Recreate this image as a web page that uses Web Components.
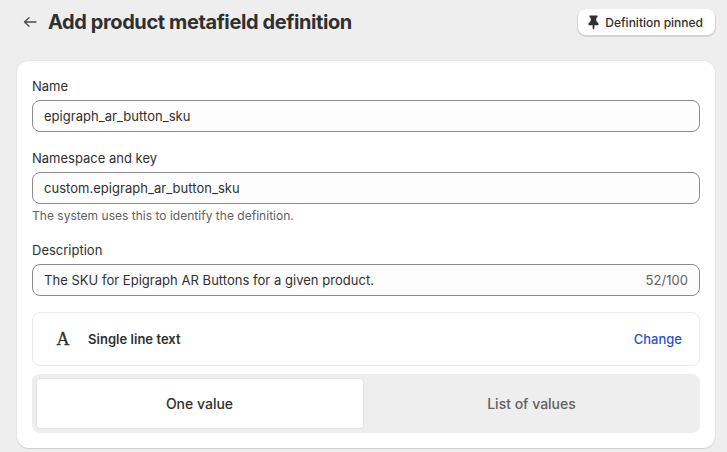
<!DOCTYPE html>
<html>
<head>
<meta charset="utf-8">
<style>
  html, body { margin: 0; height: 452px; overflow: hidden; }
  body { background: #eeeeee; font-family: Inter, "Liberation Sans", sans-serif; color: #303030; font-size: 13px; }
</style>
</head>
<body>
<page-header heading="Add product metafield definition"></page-header>
<form-card>
  <text-field label="Name" value="epigraph_ar_button_sku"></text-field>
  <text-field label="Namespace and key" value="custom.epigraph_ar_button_sku" help="The system uses this to identify the definition."></text-field>
  <text-field label="Description" value="The SKU for Epigraph AR Buttons for a given product." count="52/100"></text-field>
  <type-row name="Single line text"></type-row>
  <value-toggle></value-toggle>
</form-card>

<script>
class PageHeader extends HTMLElement {
  connectedCallback() {
    this.attachShadow({ mode: 'open' });
    const heading = this.getAttribute('heading') || '';
    this.shadowRoot.innerHTML = `
      <style>
        :host { display: flex; align-items: center; height: 44px; padding: 0 12px 0 23px; }
        svg { width: 14px; height: 14px; margin-right: 11px; flex: none; }
        h1 { margin: 0; font-size: 20px; font-weight: 700; line-height: 28px; color: #303030; flex: 1; letter-spacing: -0.4px; }
        button { all: unset; display: flex; align-items: center; gap: 5px; height: 26px; padding: 0 12px 0 9px; background: #fff; border-radius: 8px; box-shadow: 0 1px 0 1px #d4d4d4; font-size: 12px; font-weight: 500; color: #303030; }
        button svg { width: 13px; height: 15px; margin: 0; }
      </style>
      <svg viewBox="0 0 14 14" fill="none" stroke="#4a4a4a" stroke-width="1.3" stroke-linecap="round" stroke-linejoin="round"><path d="M13 7H1.5M6 2.8 1.5 7 6 11.2"/></svg>
      <h1>${heading}</h1>
      <button>
        <svg viewBox="0 0 13 15" fill="#303030"><path d="M2.5.5h8v1.7l-1.2.8v3l2.2 2.6v1.6H7.4v3l-.9 1.6-.9-1.6v-3H1.5V8.6L3.7 6V3L2.5 2.2z"/></svg>
        Definition pinned
      </button>`;
  }
}
customElements.define('page-header', PageHeader);

class FormCard extends HTMLElement {
  connectedCallback() {
    this.attachShadow({ mode: 'open' });
    this.shadowRoot.innerHTML = `
      <style>
        :host { display: flex; flex-direction: column; margin: 17px 0 0 17px; width: 698px; height: 387px; box-sizing: border-box; padding: 15px; background: #fff; border-radius: 12px; box-shadow: 0 1px 1px 0 #cfcfcf, 0 0 0 1px #e8e8e8; }
      </style>
      <slot></slot>`;
  }
}
customElements.define('form-card', FormCard);

class TextField extends HTMLElement {
  connectedCallback() {
    this.attachShadow({ mode: 'open' });
    const label = this.getAttribute('label') || '';
    const value = this.getAttribute('value') || '';
    const help = this.getAttribute('help');
    const count = this.getAttribute('count');
    this.shadowRoot.innerHTML = `
      <style>
        :host { display: block; margin-bottom: 16px; }
        label { display: block; font-size: 13px; line-height: 20px; margin-bottom: 4px; color: #303030; }
        .box { display: flex; justify-content: space-between; align-items: center; box-sizing: border-box; height: 32px; padding: 0 11px; background: #fdfdfd; border: 1px solid #8a8a8a; border-radius: 8px; font-size: 13px; letter-spacing: 0.03px; color: #303030; }
        .count { color: #616161; }
        .help { font-size: 12px; line-height: 16px; margin-top: 4px; letter-spacing: 0.02px; color: #616161; }
      </style>
      <label>${label}</label>
      <div class="box"><span>${value}</span>${count ? `<span class="count">${count}</span>` : ''}</div>
      ${help ? `<div class="help">${help}</div>` : ''}`;
  }
}
customElements.define('text-field', TextField);

class TypeRow extends HTMLElement {
  connectedCallback() {
    this.attachShadow({ mode: 'open' });
    const name = this.getAttribute('name') || '';
    this.shadowRoot.innerHTML = `
      <style>
        :host { display: flex; align-items: center; box-sizing: border-box; height: 54px; padding: 0 17px 0 23px; border: 1px solid #ebebeb; border-radius: 8px; margin-bottom: 8px; }
        .glyph { width: 14px; font-family: "Liberation Serif", serif; font-size: 18px; font-weight: 400; color: #303030; margin-right: 18px; text-align: center; -webkit-text-stroke: 0.3px #303030; }
        .name { flex: 1; font-size: 13px; font-weight: 600; letter-spacing: 0.03px; color: #303030; }
        a { font-size: 13px; font-weight: 500; color: #2a52cf; text-decoration: none; }
      </style>
      <span class="glyph">A</span>
      <span class="name">${name}</span>
      <a href="#">Change</a>`;
  }
}
customElements.define('type-row', TypeRow);

class ValueToggle extends HTMLElement {
  connectedCallback() {
    this.attachShadow({ mode: 'open' });
    this.shadowRoot.innerHTML = `
      <style>
        :host { display: flex; box-sizing: border-box; height: 59px; padding: 4px; background: #eeeeee; border-radius: 8px; }
        div { display: flex; align-items: center; justify-content: center; font-size: 14px; font-weight: 500; border-radius: 4px; }
        .on { flex: 0 0 328px; box-sizing: border-box; padding-right: 1px; background: #fff; color: #303030; box-shadow: inset 0 0 0 1px #e3e3e3; }
        .off { flex: 1; margin-right: -3px; color: #616161; }
      </style>
      <div class="on">One value</div>
      <div class="off">List of values</div>`;
  }
}
customElements.define('value-toggle', ValueToggle);
</script>
</body>
</html>
